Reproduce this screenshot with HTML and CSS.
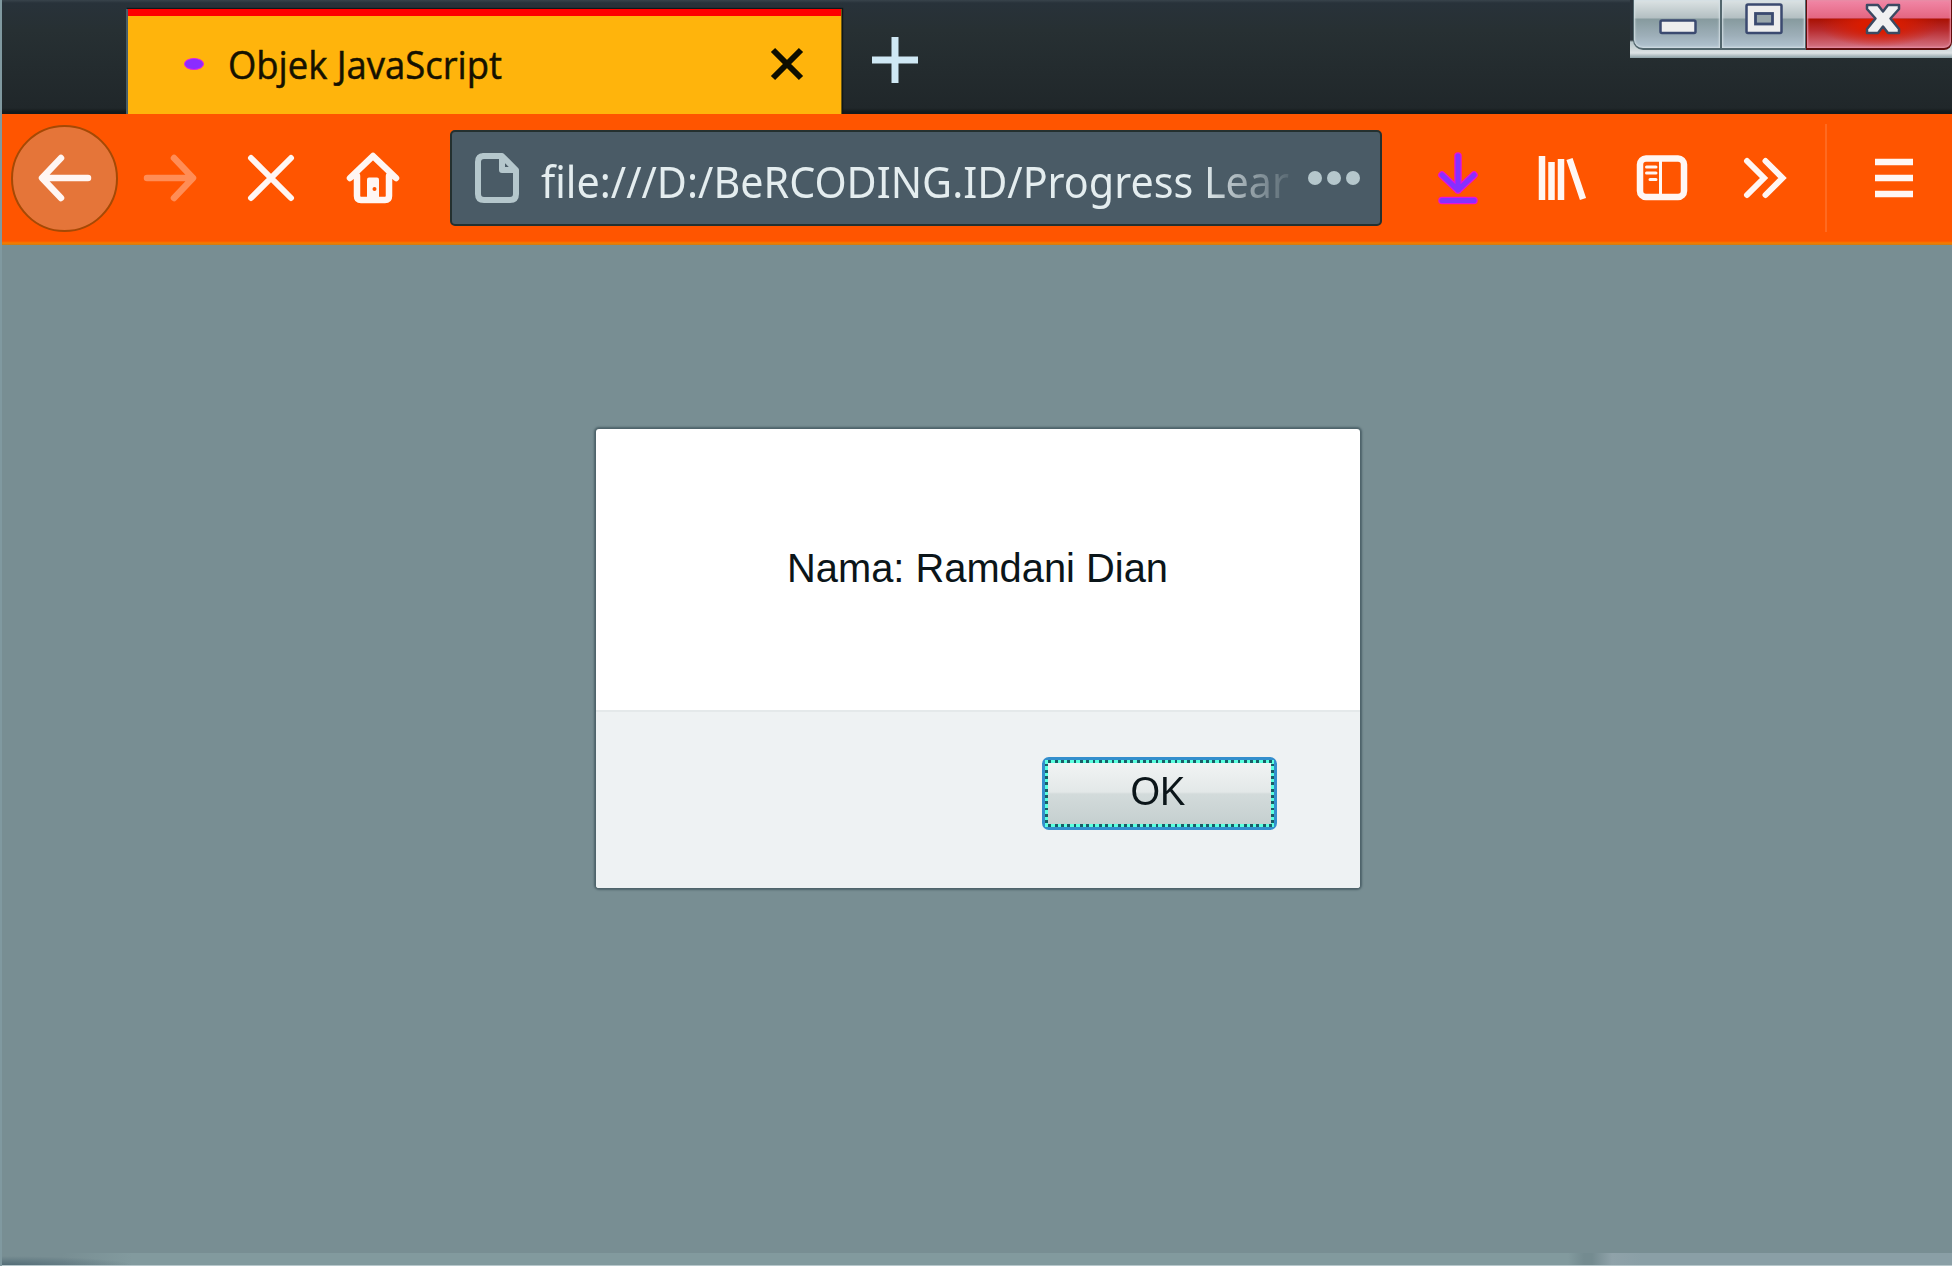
FILE: index.html
```html
<!DOCTYPE html>
<html lang="id">
<head>
<meta charset="utf-8">
<title>Objek JavaScript</title>
<link rel="stylesheet" href="styles.css">
</head>
<body>
<div class="window">
  <header class="tabstrip">
    <div class="tab">
      <span class="loading-dot"></span>
      <svg class="tab-title" width="276" height="60" viewBox="0 0 276 60"><text x="-1" y="45" textLength="274" lengthAdjust="spacingAndGlyphs">Objek JavaScript</text></svg>
      <svg class="tab-close" width="32" height="32" viewBox="0 0 32 32"><path d="M2 2 30 30M30 2 2 30"/></svg>
    </div>
    <svg class="new-tab" width="46" height="46" viewBox="0 0 46 46"><path d="M23 0V46M0 23H46"/></svg>
    <div class="controls">
      <button class="ctl minimize"><svg width="38" height="16" viewBox="0 0 38 16"><rect x="1.5" y="1.5" width="35" height="12.5" rx="1.5" fill="#eeeeee" stroke="#3b4a70" stroke-width="2.5"/></svg></button>
      <button class="ctl maximize"><svg width="38" height="32" viewBox="0 0 38 32"><rect x="1.5" y="1.5" width="35" height="28.5" rx="1.5" fill="#eeeeee" stroke="#3b4a70" stroke-width="2.5"/><rect x="10.5" y="10.5" width="17" height="10.5" fill="#9aa7ab" stroke="#3b4a70" stroke-width="2.8"/></svg></button>
      <button class="ctl close"><svg width="36" height="32" viewBox="0 0 36 32"><path d="M2 2H13L18 8.500 23 2H34V6L25.500 15.500 34 26V30H23L18 23.500 13 30H2V26L10.500 15.500 2 6Z" fill="#f0f1f2" stroke="#3b4a62" stroke-width="2.500" stroke-linejoin="round"/></svg></button>
    </div>
  </header>

  <nav class="toolbar">
    <button class="back"><svg width="52" height="46" viewBox="0 0 52 46"><path d="M49 23H6M22 3 3 23 22 43"/></svg></button>
    <svg class="icon forward" width="52" height="46" viewBox="0 0 52 46"><path d="M3 23H46M30 3 49 23 30 43"/></svg>
    <svg class="icon stop" width="46" height="46" viewBox="0 0 46 46"><path d="M3 3 43 43M43 3 3 43"/></svg>
    <svg class="icon home" width="52" height="52" viewBox="0 0 52 52"><path d="M3 26 26 4 49 26M10 24V44Q10 48 14 48H38Q42 48 42 44V24"/><path class="solid" d="M20 27.500Q20 25.500 22 25.500H30Q32 25.500 32 27.500V48H20Z"/><circle class="knob" cx="27.500" cy="37" r="2"/></svg>
    <div class="urlbar">
      <svg class="page-icon" width="46" height="52" viewBox="0 0 46 52"><path d="M9 4H28L42 18V42Q42 48 36 48H10Q4 48 4 42V10Q4 4 10 4ZM28 4V18H42"/></svg>
      <svg class="url" width="748" height="80" viewBox="0 0 748 80"><text x="0" y="60" textLength="748" lengthAdjust="spacingAndGlyphs">file:///D:/BeRCODING.ID/Progress Lear</text></svg>
      <span class="dots"><i></i><i></i><i></i></span>
    </div>
    <svg class="icon download" width="40" height="52" viewBox="0 0 40 52"><g class="halo"><path d="M20 4V38M4 23 20 38 36 23M4 48.500H36"/></g><path d="M20 4V38M4 23 20 38 36 23M4 48.500H36"/></svg>
    <svg class="icon library" width="48" height="46" viewBox="0 0 48 46"><path d="M4 1V45M13.500 7V45M23 4V45M31.500 4 45 44"/></svg>
    <svg class="icon sidebar" width="50" height="46" viewBox="0 0 50 46"><rect x="3" y="3.500" width="44" height="38.500" rx="6"/><path class="thin" d="M23.500 4V42M9.500 12H19M9.500 18H19M13 24.500H19"/></svg>
    <svg class="icon more" width="42" height="40" viewBox="0 0 42 40"><path d="M3 3 20 20 3 37M21.500 3 38.500 20 21.500 37"/></svg>
    <span class="divider"></span>
    <svg class="icon menu" width="38" height="40" viewBox="0 0 38 40"><path d="M0 4H38M0 20H38M0 36H38"/></svg>
  </nav>

  <main class="page">
    <section class="dialog">
      <div class="message"><svg width="382" height="60" viewBox="0 0 382 60"><text x="-2" y="42" textLength="381" lengthAdjust="spacingAndGlyphs">Nama: Ramdani Dian</text></svg></div>
      <div class="actions"><button class="ok"><span>OK</span></button></div>
    </section>
  </main>
  <footer class="frame"></footer>
</div>
</body>
</html>
```
FILE: styles.css
```css
* { box-sizing: border-box; }
body { margin: 0; overflow: hidden; background: #788e93; }
button { margin: 0; padding: 0; border: 0; font: inherit; }
svg { display: block; flex: none; overflow: visible; }

.window {
  width: 1952px; height: 1266px;
  display: flex; flex-direction: column;
  border-left: 2px solid #8099a0;
}

.tabstrip {
  height: 114px; flex: none;
  display: flex; align-items: flex-start;
  background: linear-gradient(#38434b 0, #28323a 3px, #273033 30px, #20272a 108px, #14191b 112px, #14191b);
}
.tab {
  width: 716px; height: 106px;
  margin: 9px 0 0 124px;
  display: flex; align-items: center;
  border-left: 2px solid #495e69;
  border-right: 1px solid #6d5b12;
  background: linear-gradient(#fe0000 0 7px, #ffb40c 7px);
  box-shadow: 1px -1px 1px #11171a;
}
.loading-dot {
  width: 20px; height: 12px; margin: 3px 0 0 56px;
  border-radius: 50%; background: #8a2cff;
  border: 1px solid #e322e4;
}
.tab-title {
  margin: 4px 0 0 25px;
  font-family: "Open Sans", sans-serif; font-size: 38px;
  fill: #151100; stroke: #151100; stroke-width: .5px;
}
.tab-close { margin: 3px 0 0 266px; }
.tab-close path { stroke: #0d0d00; stroke-width: 6; }
.new-tab { margin: 37px 0 0 30px; }
.new-tab path { stroke: #cfe8f4; stroke-width: 7; fill: none; }

.controls {
  width: 322px; height: 58px; margin-left: auto;
  display: flex; padding-left: 3px;
  background: linear-gradient(#2b343c 0 40px, #b6c4c7 42px, #dde3e5 53px, #8ca0a6 58px);
}
.ctl {
  height: 50px; display: flex; justify-content: center;
  border: solid #52666d; border-width: 0 1px 2px 1px;
  background: linear-gradient(#dce3e4 0, #b3bfc2 18px, #869a9e 19px, #9eafb9 36px, #b2c4d1 48px);
  box-shadow: inset 0 0 2px 1px #d4dfe4;
}
.minimize { width: 88px; border-bottom-left-radius: 10px; }
.minimize svg { margin: 19px 0 0 2px; }
.maximize { width: 85px; }
.maximize svg { margin: 3px 0 0 0; }
.close {
  width: 146px;
  border-color: #640c0c;
  border-bottom-right-radius: 8px;
  background:
    radial-gradient(ellipse 60px 22px at 50% 6px, #d91c00 30%, transparent) 0 19px / 100% 30px no-repeat,
    linear-gradient(#f187a7 0, #e46681 18px, #a91103 19px, #b82b2e 30px, #d47485 48px);
  box-shadow: inset 0 0 2px 1px #e68da4;
}
.close svg { margin: 3px 0 0 7px; }

.toolbar {
  height: 131px; flex: none;
  display: flex; align-items: center;
  padding-bottom: 3px;
  background: linear-gradient(#ff5500 0 127px, #f77c00 129px, #c97d17 131px);
}
.back {
  width: 107px; height: 107px; margin-left: 9px; flex: none;
  display: flex; align-items: center; justify-content: center;
  border-radius: 50%; border: 2px solid #a54905; background: #e57539;
}
.back path, .icon path, .icon rect {
  fill: none; stroke: #fff6f3; stroke-width: 6.5;
  stroke-linecap: round; stroke-linejoin: round;
}
.forward { margin-left: 26px; }
.icon.forward path { stroke: #ff8d56; }
.stop { margin-left: 52px; }
.icon.stop path { stroke-width: 6; }
.home { margin-left: 53px; }
.icon.home .solid { fill: #fff6f3; stroke: none; }
.knob { fill: #ff5500; }

.urlbar {
  width: 932px; height: 96px; margin-left: 51px; flex: none;
  display: flex; align-items: center;
  border: 2.5px solid #24302f; border-radius: 5px;
  background: #4a5b66;
}
.page-icon { margin-left: 22px; }
.page-icon path { fill: none; stroke: #b5c7cc; stroke-width: 6; stroke-linejoin: round; }
.url {
  margin-left: 21px;
  font-family: "Noto Sans", sans-serif; font-size: 44px; fill: #e4edef;
  mask-image: linear-gradient(90deg, #000 660px, rgba(0, 0, 0, .1) 748px);
}
.dots { display: flex; gap: 5px; margin-left: 19px; }
.dots i { width: 14px; height: 14px; border-radius: 50%; background: #b5c7cc; }

.download { margin-left: 56px; }
.icon.download path { stroke: #8430ff; stroke-width: 5; }
.icon.download .halo path { stroke: #e812d8; stroke-width: 7.5; }
.library { margin-left: 60px; }
.icon.library path { stroke-linecap: butt; }
.sidebar { margin-left: 51px; }
.icon.sidebar .thin { stroke-width: 3; }
.more { margin-left: 57px; }
.icon.more path { stroke-linejoin: miter; stroke-width: 6; }
.divider { width: 2px; height: 108px; margin-left: 39px; background: #ff6a20; }
.menu { margin-left: 48px; }
.icon.menu path { stroke-linecap: butt; }

.page { flex: 1; padding: 184px 0 0 594px; background: #788e93; }
.dialog {
  width: 764px; height: 459px;
  display: flex; flex-direction: column;
  border-radius: 3px; overflow: hidden;
  background: #fff; box-shadow: 0 0 2px 2px #4d6269;
}
.message { height: 281px; padding: 111px 0 0 193px; }
.message svg, .ok { font-family: "Liberation Sans", sans-serif; font-size: 40px; fill: #0b1519; }
.actions {
  flex: 1; display: flex; justify-content: flex-end; align-items: flex-start;
  padding: 45px 83px 0 0;
  border-top: 2px solid #e4e9ea; background: #eef2f3;
}
.ok {
  width: 235px; height: 73px;
  position: relative;
  color: #0b1519; line-height: 60px; padding: 0 3px 5px 0;
  border: 3px solid #338fcd; border-radius: 7px;
  background: linear-gradient(#f2f5f5 0, #e3e8e8 32px, #d3dbdb 34px, #c3cece 68px);
}
.ok::before {
  content: ""; position: absolute; inset: 0;
  --dash: #5affdf 0 3.5px, #185e67 3.5px 6.3px;
  background:
    repeating-linear-gradient(90deg, var(--dash)) 0 0 / 100% 3px no-repeat,
    repeating-linear-gradient(90deg, var(--dash)) 0 100% / 100% 3px no-repeat,
    repeating-linear-gradient(var(--dash)) 0 0 / 3px 100% no-repeat,
    repeating-linear-gradient(var(--dash)) 100% 0 / 3px 100% no-repeat;
}
.ok span { display: inline-block; transform: scaleX(.95); }

.frame {
  height: 13px; flex: none;
  border-bottom: 1px solid #b8c8cc;
  background:
    radial-gradient(ellipse 130px 9px at 0 100%, #546d77, transparent),
    linear-gradient(90deg, #788e93 0 60px, #829a9e 130px 1566px, #748b90 1582px 1590px, #8fa2a9 1610px, #8a9fa6 1640px);
}
```
